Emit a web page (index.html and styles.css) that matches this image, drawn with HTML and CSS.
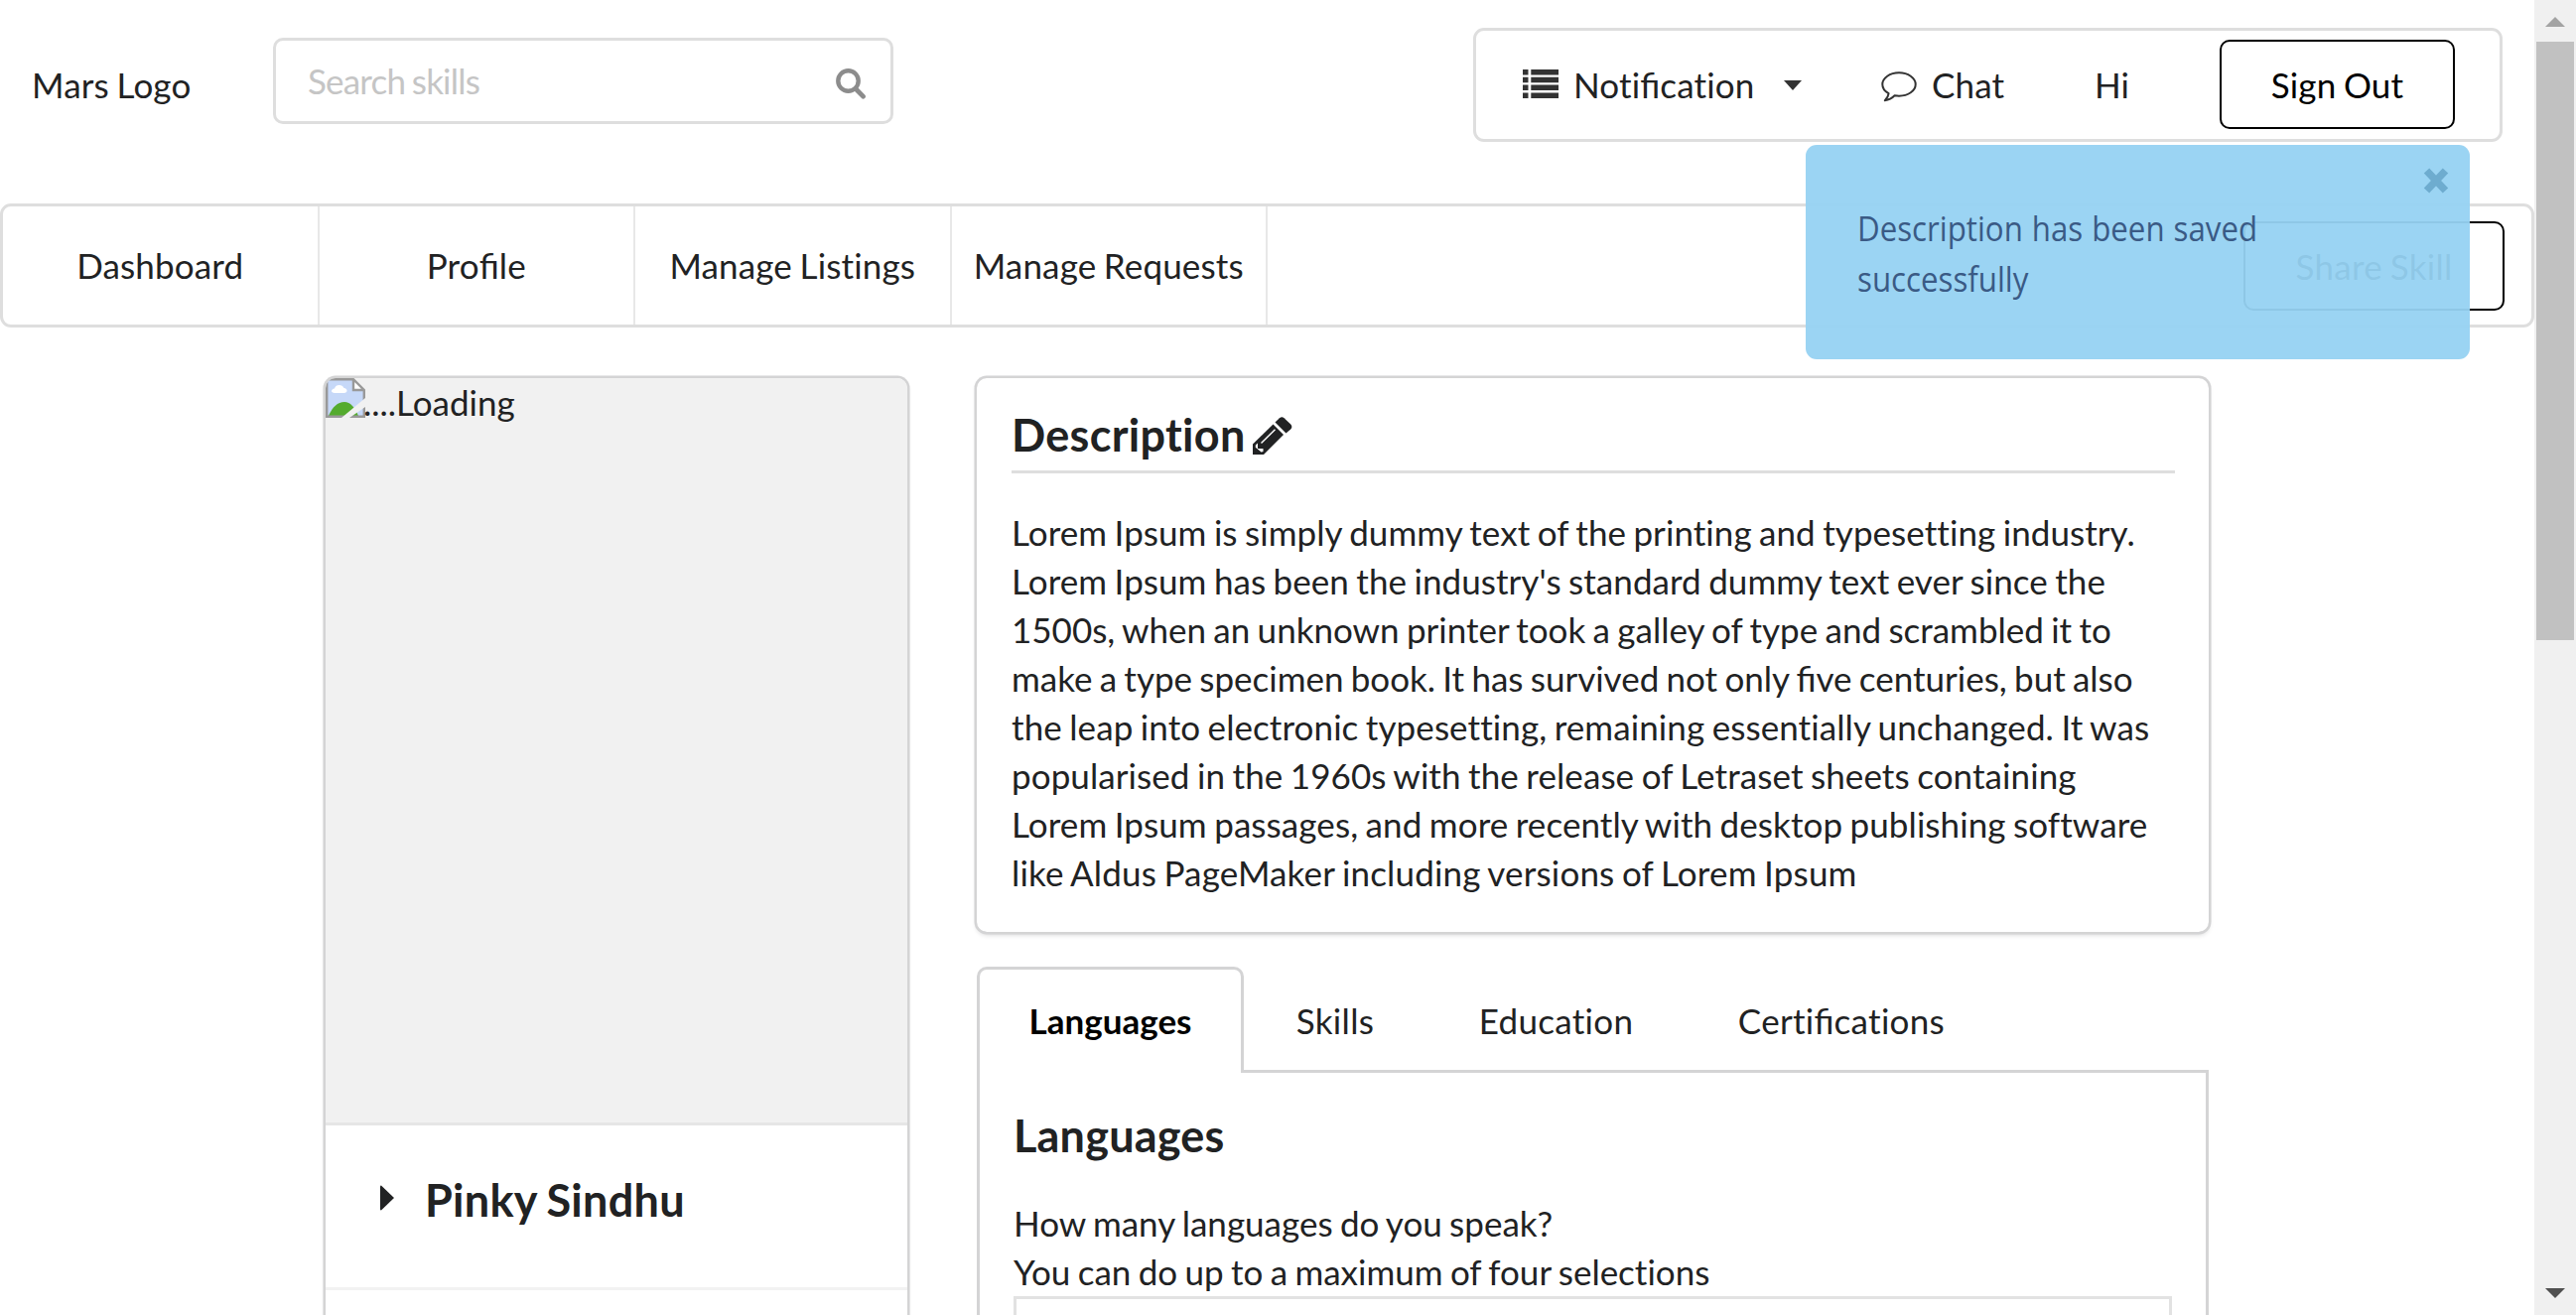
FILE: index.html
```html
<!DOCTYPE html>
<html lang="en">
<head>
<meta charset="utf-8">
<title>Profile</title>
<link rel="stylesheet" href="styles.css">
</head>
<body>
<div class="page">
  <header class="topbar">
    <div class="logo">Mars Logo</div>
    <div class="search">
      <span class="placeholder">Search skills</span>
      <svg class="search-icon" viewBox="0 0 30 31"><circle cx="12.5" cy="12.5" r="10.2" fill="none" stroke="#8c8c8c" stroke-width="4.4"/><path d="M20 20.5 27.5 28.2" stroke="#8c8c8c" stroke-width="4.8" stroke-linecap="round"/></svg>
    </div>
    <nav class="user-menu">
      <a class="item notification">
        <svg class="list-icon" viewBox="0 0 36 29" fill="#333"><path d="M0 0h5.5v5.5H0zM0 7.8h5.5v5.5H0zM0 15.6h5.5v5.5H0zM0 23.4h5.5v5.5H0zM8.3 0H36v5.5H8.3zM8.3 7.8H36v5.5H8.3zM8.3 15.6H36v5.5H8.3zM8.3 23.4H36v5.5H8.3z"/></svg>
        <span class="label">Noti<span class="lig">fi</span>cation</span>
        <svg class="caret" viewBox="0 0 18 10"><path d="M0 0h18L9 10z" fill="#333"/></svg>
      </a>
      <a class="item chat">
        <svg class="chat-icon" viewBox="0 0 36 31"><path d="M18 1.3C8.800 1.300 1.300 6.500 1.300 13C1.300 16.800 3.700 20 7.600 22.200C7.300 25 6.200 27 3.800 29.200C8 28.700 11 27 13.600 24.300C15 24.500 16.500 24.700 18 24.700C27.200 24.700 34.700 19.500 34.700 13S27.200 1.300 18 1.300Z" fill="none" stroke="#333" stroke-width="2" stroke-linejoin="round"/></svg>
        <span>Chat</span>
      </a>
      <a class="item hi">Hi</a>
      <a class="button">Sign Out</a>
    </nav>
  </header>

  <nav class="mainmenu">
    <a class="tab-link">Dashboard</a>
    <a class="tab-link"><span>Pro<span class="lig">fi</span>le</span></a>
    <a class="tab-link">Manage Listings</a>
    <a class="tab-link">Manage Requests</a>
    <a class="button share">Share Skill</a>
  </nav>

  <main class="content">
    <aside class="card profile">
      <div class="photo">
        <svg class="broken" viewBox="0 0 40 40">
          <path d="M1 1h27l11 11v27H1z" fill="#c6d8f8"/>
          <path d="M3 38c4-9 9-14 16-14 6 0 10 5 14 14z" fill="#54ab2e"/>
          <path d="M9 15c-4 0-4-4 0-4.500 1-4.500 8-4.500 9.500-.5 4 .5 4 5 0 5z" fill="#fff"/>
          <path d="M28 1v11h11z" fill="#fff"/>
          <path d="M1.200 1.200h26.800l10.800 10.800v26.800H1.200zM28 1.200v10.800h10.800" fill="none" stroke="#999" stroke-width="2.400"/>
          <path d="M40 20v9L24 40H16z" fill="#f1f1f1"/>
        </svg><span>....Loading</span>
      </div>
      <div class="person">
        <svg class="tri" viewBox="0 0 14 26"><path d="M1 0.500 14 13 1 25.500q-1 0-1-1V1.500q0-1 1-1z" fill="#212223"/></svg>
        <h3>Pinky Sindhu</h3>
      </div>
      <div class="rest"></div>
    </aside>

    <section class="main-col">
      <article class="card description">
        <h3 class="desc-title">Description<svg class="pencil" viewBox="0 0 40 39"><path fill="#212223" d="M0 27.500 20.500 7.500 31 18 11 38H0z"/><path fill="#212223" d="M22.500 5.500 27 1.200q2.300-2 4.600 0L38.200 7.600q2.300 2.400 0 4.800L33.500 16.500z"/><path d="M8.500 26.500 22.500 12.800" stroke="#fff" stroke-width="1.500"/><path d="M2.800 28.500 5 26.500v5.500h5.500v3L8.500 35.500 2.800 31z" fill="#fff"/><path d="M2.800 31v4.500H8z" fill="#212223"/></svg></h3>
        <p><span class="wide-1">Lorem Ipsum is simply dummy text of the printing and typesetting industry.<br>Lorem Ipsum has been the industry's standard dummy text ever since the</span><br>1500s, when an unknown printer took a galley of type and scrambled it to<br><span class="tight">make a type specimen book. It has survived not only <span class="lig">fi</span>ve centuries, but also</span><br><span class="wide-2">the leap into electronic typesetting, remaining essentially unchanged. It was<br>popularised in the 1960s with the release of Letraset sheets containing<br>Lorem Ipsum passages, and more recently with desktop publishing software</span><br><span class="wide-3">like Aldus PageMaker including versions of Lorem Ipsum</span></p>
      </article>

      <div class="tabs">
        <a class="tab active">Languages</a>
        <a class="tab">Skills</a>
        <a class="tab">Education</a>
        <a class="tab">Certi<span class="lig">fi</span>cations</a>
      </div>
      <div class="panel">
        <h3>Languages</h3>
        <p>How many languages do you speak?<br>You can do up to a maximum of four selections</p>
        <div class="table"></div>
      </div>
    </section>
  </main>
</div>

<div class="scrollbar">
  <svg class="arrow" viewBox="0 0 20 10"><path d="M10 0 20 10H0z" fill="#a3a3a3"/></svg>
  <div class="thumb"></div>
  <svg class="arrow down" viewBox="0 0 20 10"><path d="M0 0h20L10 10z" fill="#505050"/></svg>
</div>

<div class="toast">
  <svg class="close" viewBox="0 0 26 28"><path d="M3.500 4 22.500 24M22.500 4 3.500 24" stroke="#6eaccf" stroke-width="7.500"/></svg>
  <div class="toast-text">Description has been saved<br>successfully</div>
</div>
</body>
</html>
```
FILE: styles.css
```css
* { box-sizing: border-box; }
body {
  margin: 0;
  width: 2595px;
  height: 1325px;
  overflow: hidden;
  display: flex;
  position: relative;
  background: #fff;
  color: #212223;
  font: 35px/49px Lato, "Liberation Sans", sans-serif;
  font-variant-ligatures: none;
  word-spacing: -1.600px;
}
svg { display: block; flex: none; }
h3, p { margin: 0; }
h3 { font-size: 45px; line-height: 56px; font-weight: 700; white-space: nowrap; letter-spacing: 0.200px; }
.page { width: 2553px; height: 1325px; overflow: hidden; flex: none; }

.topbar { display: flex; height: 205px; align-items: flex-start; }
.logo { width: 275px; padding: 61px 0 0 32px; white-space: nowrap; flex: none; letter-spacing: 0.200px; }
.search {
  width: 625px; height: 87px; margin-top: 38px; padding: 0 25px 0 32px;
  border: 3px solid #dedede; border-radius: 10px;
  display: flex; align-items: center; justify-content: space-between; flex: none;
}
.placeholder { color: #c5c5c5; letter-spacing: -0.800px; }
.search-icon { width: 30px; height: 31px; margin-top: 5px; }
.user-menu {
  margin: 28px 0 0 584px; width: 1037px; height: 115px;
  border: 3px solid #dedede; border-radius: 11px;
  display: flex; align-items: center; flex: none;
  letter-spacing: 0.150px;
}
.item { display: flex; align-items: center; white-space: nowrap; }
.notification { margin-left: 47px; width: 361px; }
.list-icon { width: 36px; height: 29px; margin: -3px 15px 0 0; }
.notification .label { width: 212px; }
.caret { width: 18px; height: 10px; }
.chat { width: 215px; }
.chat-icon { width: 36px; height: 31px; margin: 4px 15px 0 0; }
.hi { width: 126px; }
.button {
  width: 237px; height: 90px; border: 2.500px solid #000; border-radius: 10px; color: #000;
  display: flex; align-items: center; justify-content: center; white-space: nowrap; flex: none;
}
.user-menu .button { margin-bottom: 1px; }

.mainmenu {
  width: 2553px; height: 125px; border: 3px solid #dedede; border-radius: 11px;
  display: flex; align-items: stretch; letter-spacing: 0.150px;
}
.tab-link {
  width: 318.500px; border-right: 2px solid #e8e8e8; flex: none;
  display: flex; align-items: center; justify-content: center; white-space: nowrap;
}
.share { width: 263px; margin: 15px 27px 0 auto; letter-spacing: 0.300px; }

.content { display: flex; margin-top: 51px; padding-left: 328px; }
.card { border-radius: 10px; box-shadow: 0 2.500px 5px 0 #d4d4d5, 0 0 0 2.500px #d4d4d5; flex: none; }
.profile { width: 586px; height: 1100px; overflow: hidden; }
.photo { height: 750px; background: #f1f1f1; display: flex; align-items: flex-start; }
.broken { width: 40px; height: 40px; }
.photo span { margin-left: -2px; }
.person { height: 166px; border-top: 3px solid #e6e6e6; padding: 47px 0 0 55px; display: flex; align-items: flex-start; }
.person h3 { letter-spacing: 0.300px; }
.tri { width: 14px; height: 26px; margin: 13px 31px 0 0; }
.rest { border-top: 3px solid #f2f2f2; }

.main-col { margin-left: 70px; width: 1241px; flex: none; }
.description { width: 1241px; height: 558px; padding: 29px 34px 0 35px; }
.desc-title { display: flex; height: 67px; border-bottom: 3px solid #dedede; letter-spacing: 0.300px; }
.pencil { width: 40px; height: 39px; margin: 10px 0 0 7px; }
.description p { padding-top: 35px; white-space: nowrap; }
.wide-1 { letter-spacing: 0.060px; }
.wide-2 { letter-spacing: 0.085px; }
.wide-3 { letter-spacing: 0.170px; }
.tight { word-spacing: -1.700px; }

.tabs { display: flex; height: 107px; margin: 35px 0 0; position: relative; }
.tab { padding: 30px 52.800px 0; white-space: nowrap; letter-spacing: 0.300px; }
.tab.active {
  width: 269px; height: 107px; padding: 27px 0 0; text-align: center; background: #fff;
  border: solid #d4d4d5; border-width: 3px 3px 0; border-radius: 10px 10px 0 0;
  font-weight: 700; color: #000; flex: none; letter-spacing: 0;
}
.panel {
  width: 1241px; height: 300px; margin: -3px 0 0; padding: 35px 34px 0;
  border: 3px solid #d4d4d5; border-bottom: 0;
}
.panel p { padding-top: 36px; }
.table { height: 100px; border: 3px solid #e2e2e2; }
.lig { font-variant-ligatures: normal; letter-spacing: 0; }

.scrollbar { width: 42px; height: 1325px; background: #f0f0f0; flex: none; display: flex; flex-direction: column; align-items: center; }
.arrow { width: 20px; height: 10px; margin: 17px 0 15px; }
.thumb { width: 38px; height: 603px; background: #c1c1c1; }
.arrow.down { margin: auto 0 17px; }

.toast {
  position: absolute; left: 1819px; top: 146px; width: 669px; height: 216px; border-radius: 11px;
  background: rgba(150, 210, 242, 0.95); color: #3a5a85;
}
.close { position: absolute; right: 21px; top: 22px; width: 26px; height: 28px; }
.toast-text {
  padding: 58px 0 0; margin-left: 52px; font: 35.500px/50.500px "Open Sans", sans-serif; white-space: nowrap;
  word-spacing: 1px; transform: scaleX(0.88); transform-origin: left top;
}
```
